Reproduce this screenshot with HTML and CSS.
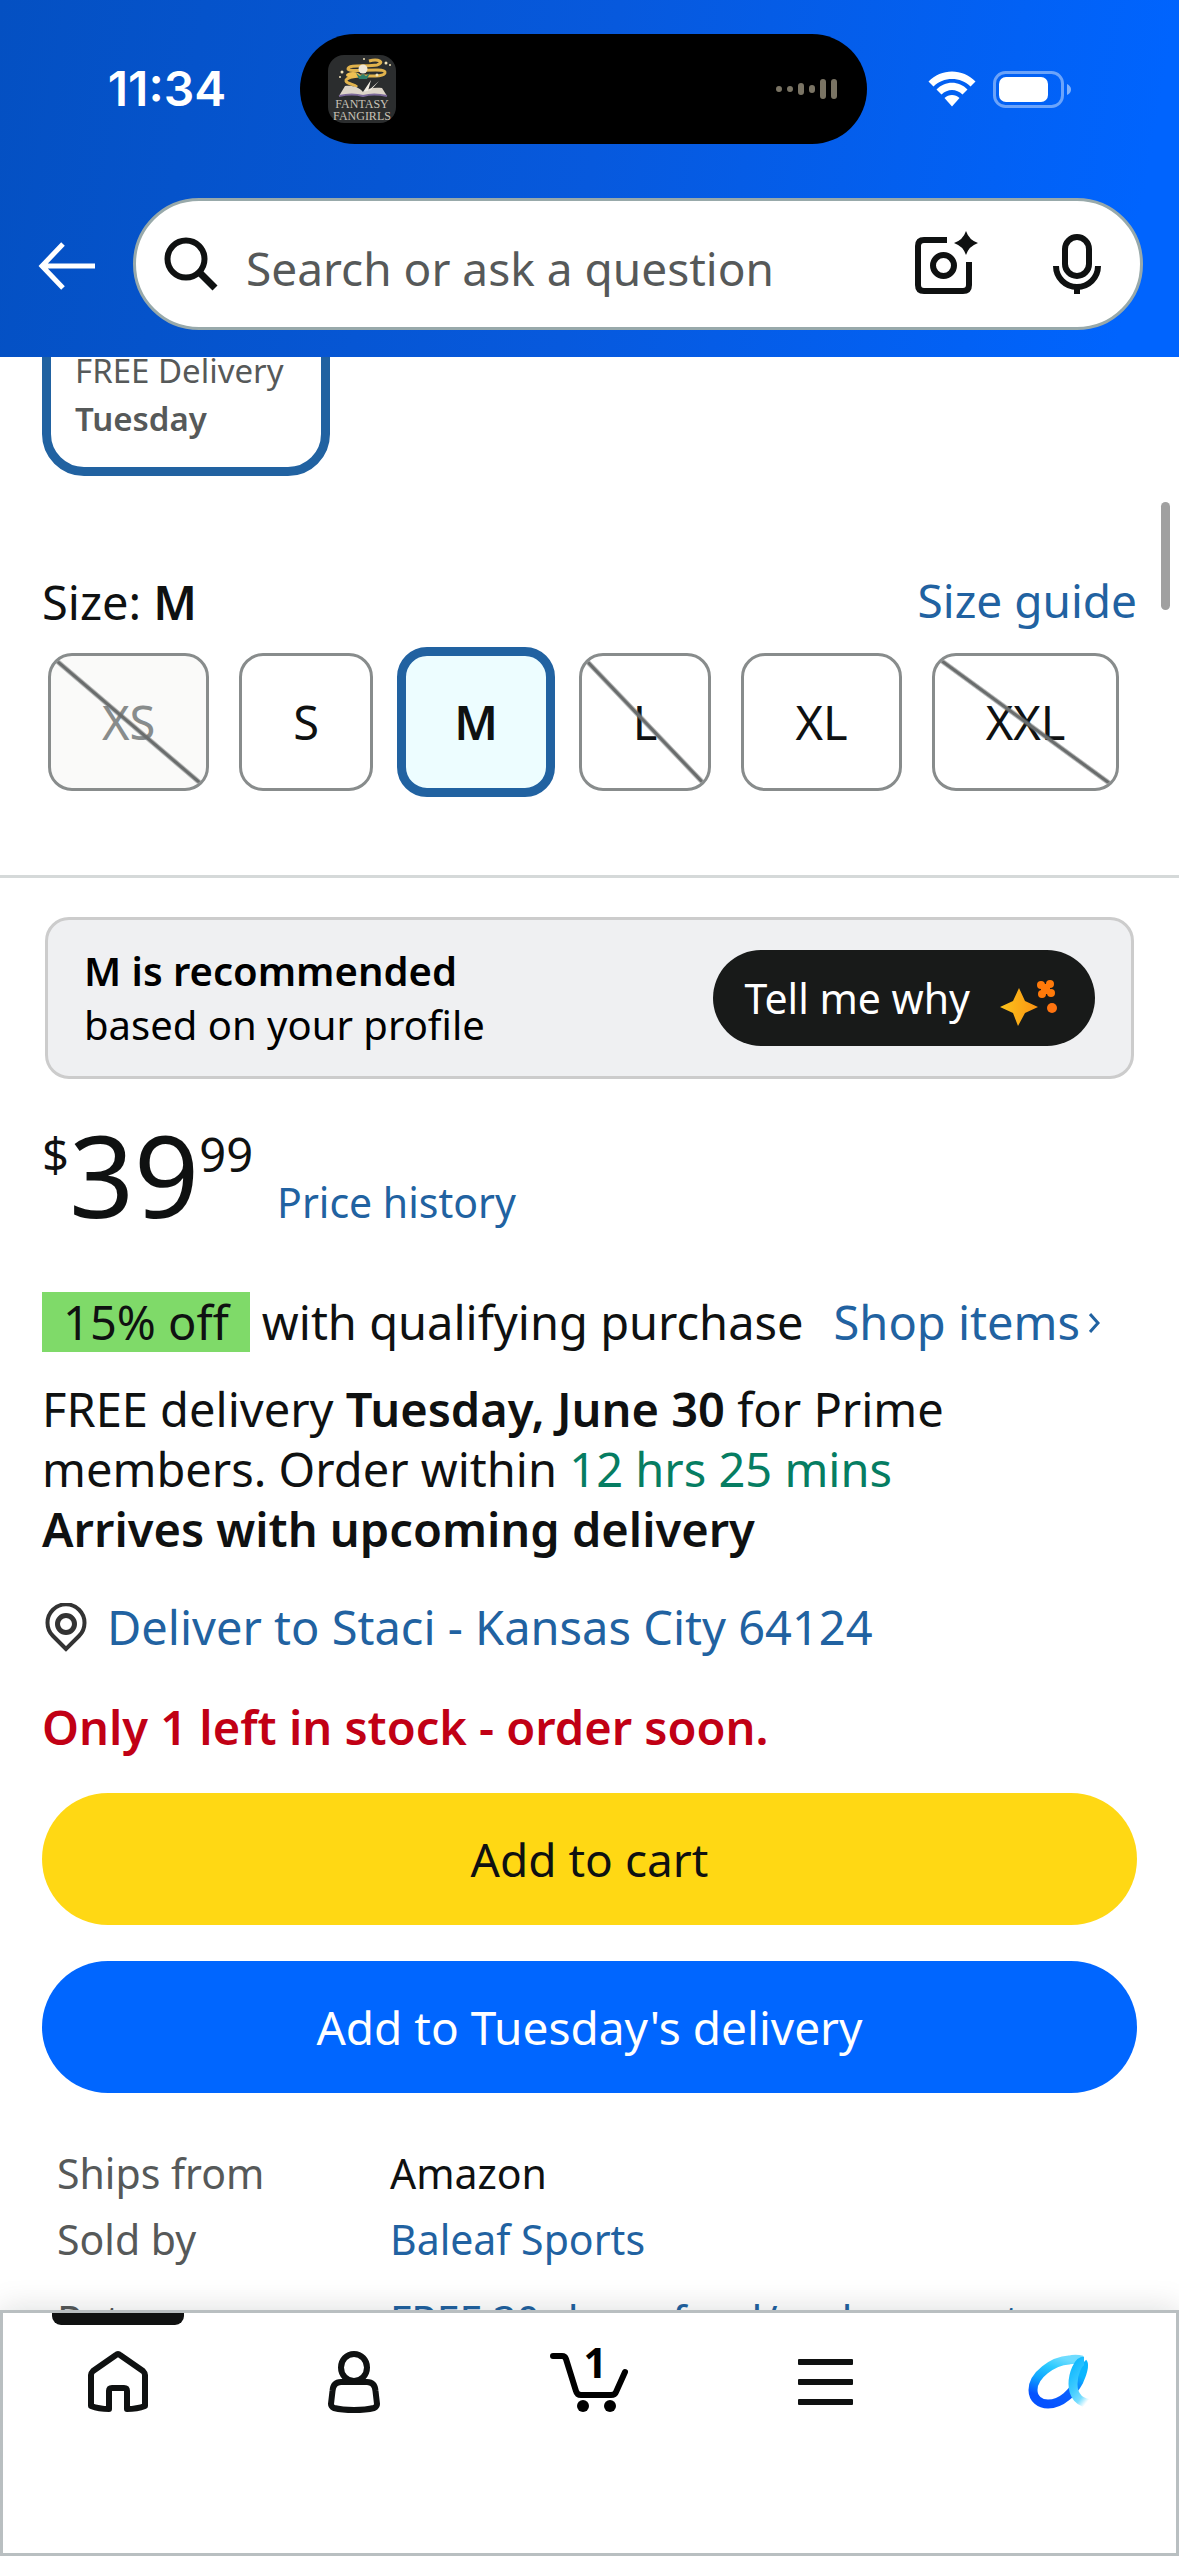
FILE: index.html
```
<!DOCTYPE html>
<html lang="en">
<head>
<meta charset="utf-8">
<meta name="viewport" content="width=device-width, initial-scale=1">
<title>Product details</title>
<link rel="stylesheet" href="styles.css">
</head>
<body>
<div class="app">
  <header class="header">
    <div class="status">
      <time class="status-time">11:34</time>
      <div class="island">
        <svg class="cover" viewBox="0 0 68 68" role="img" aria-label="Fantasy Fangirls podcast">
          <rect width="68" height="68" rx="16" fill="#2b2d2e"/>
          <path d="M41 6c10-3 16 2 8 4-9 2-29-1-29 4 0 4 36-2 37 3 1 5-14 4-22 4-9 0-18 2-17 5s8 3 11 6" fill="none" stroke="#e0b24c" stroke-width="3"/>
          <ellipse cx="25" cy="20" rx="7" ry="3" fill="#efbf52"/>
          <circle cx="35" cy="14" r="4.500" fill="#efe6d6"/>
          <path d="M28 18l4 3 3-2 3 2 4-3-3 6h-8z" fill="#2f7f6a"/>
          <path d="M11 41l6-10c7-1 14 1 18 6 5-4 12-5 19-4l5 8c-9-2-17-2-24 0-7-2-15-2-24 0z" fill="#ddd5c8"/>
          <path d="M35 37l8-12-3 11 11-10-8 9z" fill="#f3eee4"/>
          <path d="M11 41c9-2 17-2 24 0 7-2 15-2 24 0" fill="none" stroke="#7d6a9a" stroke-width="2"/>
          <g fill="#f2e3b8"><circle cx="14" cy="17" r="1.500"/><circle cx="12" cy="22" r="1"/><circle cx="36" cy="4" r="1"/><circle cx="58" cy="8" r="1.500"/><circle cx="49" cy="20" r="1.500"/><circle cx="62" cy="10" r="1"/></g>
          <text x="34" y="53" text-anchor="middle" font-family="Liberation Serif, serif" font-size="12" fill="#c9c3b8">FANTASY</text>
          <text x="34" y="65" text-anchor="middle" font-family="Liberation Serif, serif" font-size="12" fill="#c9c3b8">FANGIRLS</text>
        </svg>
        <svg class="levels" viewBox="0 0 62 22" aria-hidden="true" fill="none" stroke="#7a7464" stroke-width="6" stroke-linecap="round">
          <path d="M3 11v0.010M14 11v0.010M25 8v6M36 10v2M47 4v14M58 4v14"/>
        </svg>
      </div>
      <div class="status-icons">
        <svg class="wifi" viewBox="0 0 48 36" aria-hidden="true" fill="#fff">
          <path d="M0.500 10.500C13-3 35-3 47.500 10.500l-5 5C33 5.500 15 5.500 5.500 15.500z"/>
          <path d="M8.500 18.500C17 9.500 31 9.500 39.500 18.500l-5 5c-6-6-15-6-21 0z"/>
          <path d="M16.500 27c4-4 11-4 15 0L24 35.500z"/>
        </svg>
        <svg class="battery" viewBox="0 0 78 37" aria-hidden="true">
          <rect x="1.500" y="1.500" width="68" height="34" rx="11" fill="none" stroke="#fff" stroke-opacity=".42" stroke-width="3"/>
          <rect x="6" y="6" width="49" height="25" rx="7" fill="#fff"/>
          <path d="M74 13q4 2 4 5.500t-4 5.500z" fill="#fff" fill-opacity=".5"/>
        </svg>
      </div>
    </div>
    <div class="search-row">
      <button class="icon-button back" type="button" aria-label="Back">
        <svg width="58" height="48" viewBox="0 0 58 48" fill="none" stroke="#fff" stroke-width="5"><path d="M57 24H4M25 2L4 24l21 22"/></svg>
      </button>
      <form class="search" role="search">
        <svg width="54" height="54" viewBox="0 0 54 54" fill="none" stroke="#0f1111" stroke-width="6" aria-hidden="true"><circle cx="22" cy="22" r="18.500"/><path d="M35 35l16 16" stroke-width="7"/></svg>
        <input class="search-input" type="search" placeholder="Search or ask a question" aria-label="Search or ask a question">
        <button class="icon-button" type="button" aria-label="Search with camera">
          <svg width="66" height="66" viewBox="0 0 66 66" fill="none" stroke="#0f1111" stroke-width="6"><path d="M32 9H9q-6 0-6 6v39q0 6 6 6h39q6 0 6-6V31"/><circle cx="28.500" cy="34.500" r="10.500"/><path d="M51 0q3 9 12 12-9 3-12 12-3-9-12-12 9-3 12-12z" fill="#0f1111" stroke="none"/></svg>
        </button>
        <button class="icon-button mic" type="button" aria-label="Search by voice">
          <svg width="48" height="60" viewBox="0 0 48 60" fill="none" stroke="#0f1111" stroke-width="6"><rect x="12" y="3" width="24" height="39" rx="12"/><path d="M3 32a21 21 0 0 0 42 0M24 53v7"/></svg>
        </button>
      </form>
    </div>
  </header>

  <main class="content">
    <section class="variant">
      <div class="variant-card">
        <div>FREE Delivery</div>
        <strong>Tuesday</strong>
      </div>
    </section>

    <section class="sizes">
      <div class="sizes-head">
        <div>Size: <strong>M</strong></div>
        <a class="size-guide" href="#">Size guide</a>
      </div>
      <div class="size-list">
        <button class="size crossed" type="button" disabled>XS</button>
        <button class="size" type="button">S</button>
        <button class="size selected" type="button" aria-pressed="true">M</button>
        <button class="size crossed" type="button">L</button>
        <button class="size" type="button">XL</button>
        <button class="size crossed" type="button">XXL</button>
      </div>
    </section>

    <section class="details">
      <div class="advice">
        <div class="advice-text"><strong>M is recommended</strong><br>based on your profile</div>
        <button class="why" type="button">Tell me why
          <svg class="sparkles" width="62" height="54" viewBox="0 0 62 54" aria-hidden="true">
            <defs><linearGradient id="gold" x1="0" x2="1"><stop offset="0" stop-color="#fbc41c"/><stop offset="1" stop-color="#fb9312"/></linearGradient></defs>
            <path d="M22 11l6 13 13 6-13 6-7 13-5-13-13-6 13-6z" fill="url(#gold)"/>
            <g fill="#ff7a0a"><circle cx="44" cy="8" r="4"/><circle cx="53" cy="7" r="4"/><circle cx="45" cy="17" r="4"/><circle cx="54" cy="16" r="4"/><rect x="44" y="7" width="9" height="10"/></g>
            <circle cx="55" cy="31" r="5" fill="#ff7410"/>
          </svg>
        </button>
      </div>

      <div class="price-row">
        <div class="price"><span class="price-small">$</span><span class="price-whole">39</span><span class="price-small">99</span></div>
        <a class="price-history" href="#">Price history</a>
      </div>

      <div class="promo">
        <span class="badge">15% off</span>
        <span class="promo-text">with qualifying purchase</span>
        <a class="shop" href="#">Shop items
          <svg width="12" height="22" viewBox="0 0 12 22" fill="none" stroke="currentColor" stroke-width="3" aria-hidden="true"><path d="M1 3l8 9-8 9"/></svg>
        </a>
      </div>

      <p class="delivery">FREE delivery <strong>Tuesday, June 30</strong> for Prime members. Order within <span class="countdown">12 hrs 25 mins</span><br><strong>Arrives with upcoming delivery</strong></p>

      <a class="address" href="#">
        <svg width="42" height="49" viewBox="0 0 42 49" fill="none" stroke="#333" aria-hidden="true"><path d="M21 46L8 33a18.500 18.500 0 1 1 26 0z" stroke-width="4"/><circle cx="21" cy="21" r="8.500" stroke-width="5"/></svg>
        Deliver to Staci - Kansas City 64124
      </a>

      <p class="stock">Only 1 left in stock - order soon.</p>

      <div class="actions">
        <button class="cta cart" type="button">Add to cart</button>
        <button class="cta add-delivery" type="button">Add to Tuesday's delivery</button>
      </div>

      <table class="facts">
        <tr><th scope="row">Ships from</th><td>Amazon</td></tr>
        <tr><th scope="row">Sold by</th><td><a href="#">Baleaf Sports</a></td></tr>
        <tr class="returns"><th scope="row">Returns</th><td><a href="#">FREE 30-day refund/replacement</a></td></tr>
      </table>
    </section>
  </main>

  <div class="scroll-thumb"></div>

  <nav class="tabs" aria-label="Main">
    <a class="tab active" href="#" aria-label="Home">
      <svg width="72" height="72" viewBox="0 0 72 72" fill="none" stroke="#0f1111" stroke-width="6" stroke-linejoin="round"><path d="M34 9q2-2 4 0l23 16q2 2 2 4v31q-8 3-18 3V45q0-3-3-3H30q-3 0-3 3v18q-10 0-18-3V29q0-2 2-4z"/></svg>
    </a>
    <a class="tab" href="#" aria-label="Account">
      <svg width="72" height="72" viewBox="0 0 72 72" fill="none" stroke="#0f1111" stroke-width="6"><ellipse cx="36" cy="21.500" rx="13" ry="13.500"/><path d="M23 36h26c5 0 8 3 8.500 9l1.500 13c0 2-1 3-3 4-6 1.500-13 2-20 2s-14-.5-20-2c-2-1-3-2-3-4l1.500-13c.5-6 3.500-9 8.500-9z"/></svg>
    </a>
    <a class="tab" href="#" aria-label="Cart, 1 item">
      <span class="cart-icon">
        <svg width="80" height="72" viewBox="0 0 80 72" fill="none" stroke="#000" stroke-width="6" stroke-linecap="round"><path d="M4 10h9q3 0 4 3l10 32q1 4 5 4h30q4 0 5-3l9-20"/><circle cx="34" cy="60" r="6" fill="#000" stroke="none"/><circle cx="61" cy="60" r="6" fill="#000" stroke="none"/></svg>
        <span class="cart-count">1</span>
      </span>
    </a>
    <a class="tab" href="#" aria-label="Menu">
      <svg width="72" height="72" viewBox="0 0 72 72" fill="#0f1111"><rect x="9" y="13" width="55" height="6" rx="1"/><rect x="9" y="33" width="55" height="6" rx="1"/><rect x="9" y="53" width="55" height="6" rx="1"/></svg>
    </a>
    <a class="tab" href="#" aria-label="Alexa">
      <svg width="72" height="72" viewBox="0 0 72 72" fill="none" stroke-width="9">
        <defs>
          <linearGradient id="loop" x1=".7" y1="0" x2=".3" y2="1"><stop offset="0" stop-color="#6fdcff"/><stop offset=".25" stop-color="#2ccbff"/><stop offset=".55" stop-color="#0fa6ff"/><stop offset=".9" stop-color="#0552ff"/></linearGradient>
          <linearGradient id="rise" x1="0" y1="1" x2=".6" y2="0"><stop offset="0" stop-color="#0552ff"/><stop offset=".5" stop-color="#0a60ff"/><stop offset=".9" stop-color="#0bb6ff"/></linearGradient>
          <linearGradient id="tail" x1="0" y1="0" x2=".6" y2="1"><stop offset="0" stop-color="#0bb6ff"/><stop offset=".5" stop-color="#3fcbff"/><stop offset=".8" stop-color="#79deff"/><stop offset="1" stop-color="#79deff" stop-opacity="0"/></linearGradient>
        </defs>
        <path d="M23 58c14 0 25-12 31-23 4-9 6-16 4-18" stroke="url(#rise)"/>
        <path d="M57 14c-4-1-9-1-13 0C28 15 8 29 8 44c0 9 7 14 15 14" stroke="url(#loop)"/>
        <path d="M59 15c-6 0-11 13-11 23s5 20 21 20" stroke="url(#tail)"/>
      </svg>
    </a>
  </nav>
</div>
</body>
</html>
```
FILE: styles.css
```
*, *::before, *::after { box-sizing: border-box; }

body {
  margin: 0;
  background: #fff;
  color: #0f1111;
  font-family: "Noto Sans", "Open Sans", sans-serif;
  font-size: 47px;
  line-height: 60px;
}

strong { font-weight: 600; }
p { margin: 0; }
a { color: #2162a1; text-decoration: none; }
svg { display: block; flex: none; }

button {
  margin: 0;
  padding: 0;
  border: 0;
  background: none;
  color: inherit;
  font: inherit;
}

.app {
  position: relative;
  display: flex;
  flex-direction: column;
  height: 100vh;
}

/* Header */
.header {
  position: relative;
  z-index: 1;
  flex: none;
  padding: 34px 36px 27px 38px;
  background: linear-gradient(100deg, #0450c2 0%, #0759dd 50%, #0064fe 95%);
}

.status {
  display: grid;
  grid-template-columns: 1fr 567px 1fr;
  align-items: center;
  margin: 0 -36px 0 -38px;
  padding-right: 12px;
}

.status-time {
  padding-left: 34px;
  color: #fff;
  font-family: Inter, "Liberation Sans", sans-serif;
  font-size: 48px;
  font-weight: 600;
  text-align: center;
}

.island {
  display: flex;
  align-items: center;
  justify-content: space-between;
  height: 110px;
  padding: 0 29px 0 28px;
  border-radius: 55px;
  background: #000;
}

.cover { width: 68px; height: 68px; }
.levels { width: 62px; height: 22px; }
.wifi { width: 48px; height: 36px; }
.battery { width: 78px; height: 37px; }

.status-icons {
  display: flex;
  align-items: center;
  justify-content: center;
  gap: 17px;
  padding-right: 36px;
}

.search-row {
  display: flex;
  align-items: center;
  gap: 37px;
  margin-top: 54px;
}

.icon-button { flex: none; }
.back { padding-top: 4px; }

.search {
  display: flex;
  flex: 1;
  align-items: center;
  min-width: 0;
  height: 132px;
  padding: 0 39px 0 28px;
  border: 3px solid #98a9aa;
  border-radius: 66px;
  background: #fff;
}

.search-input {
  flex: 1;
  min-width: 0;
  height: 80px;
  margin-left: 28px;
  padding: 8px 0 0;
  border: 0;
  outline: 0;
  background: none;
  color: #0f1111;
  font: inherit;
  font-size: 46px;
}

.search-input::placeholder { color: #565959; opacity: 1; }
.mic { margin-left: 72px; }

/* Scrolling page */
.content {
  flex: 1;
  min-height: 0;
  overflow-y: auto;
  scrollbar-width: none;
}

.variant { padding: 0 42px; }

.variant-card {
  width: 288px;
  margin-top: -43px;
  padding: 24px;
  border: 9px solid #2162a1;
  border-radius: 42px;
  color: #565959;
  font-size: 33px;
  line-height: 48px;
}

.sizes {
  padding: 96px 42px 84px;
  border-bottom: 3px solid #d5d9d9;
}

.sizes-head {
  display: flex;
  justify-content: space-between;
}

.size-guide {
  font-size: 46px;
  line-height: 56px;
}

.size-list {
  display: flex;
  align-items: center;
  gap: 30px;
  height: 138px;
  margin-top: 21px;
  padding: 0 6px;
}

.size {
  position: relative;
  flex: none;
  height: 138px;
  padding: 0 51px;
  border: 3px solid #888c8c;
  border-radius: 24px;
  background: #fff;
  overflow: hidden;
}

.size:disabled {
  background: #fafaf9;
  color: #888c8c;
}

.size.selected {
  height: 150px;
  margin: 0 -6px;
  padding: 0 48px;
  border: 9px solid #2162a1;
  border-radius: 30px;
  background: #edfdff;
  font-weight: 600;
}

.size.crossed::after {
  content: "";
  position: absolute;
  inset: 0;
  background: linear-gradient(to top right, transparent calc(50% - 3px), #6a6d6d calc(50% - 1px), #6a6d6d calc(50% + 1px), transparent calc(50% + 3px));
}

.details { padding: 39px 42px 0; }

.advice {
  display: flex;
  align-items: center;
  justify-content: space-between;
  height: 162px;
  margin: 0 3px;
  padding: 0 36px;
  border: 3px solid #ccc;
  border-radius: 24px;
  background: #eff0f2;
  color: #000;
  font-size: 40px;
  line-height: 54px;
}

.why {
  display: flex;
  align-items: center;
  gap: 27px;
  height: 96px;
  padding: 0 36px 0 32px;
  border-radius: 48px;
  background: #181a19;
  color: #fff;
  font-size: 41px;
}

.sparkles { margin-top: 12px; }

.price-row {
  display: flex;
  align-items: flex-end;
  gap: 24px;
  margin-top: 35px;
}

.price { display: flex; }
.price-small { line-height: 80px; }
.price-whole { font-size: 114px; line-height: 120px; }
.price-history { font-size: 41px; line-height: 64px; }

.promo {
  display: flex;
  margin-top: 58px;
}

.badge {
  padding: 0 21px;
  background: #7fda69;
}

.promo-text { margin-left: 12px; }

.shop {
  display: flex;
  align-items: center;
  gap: 9px;
  margin-left: 30px;
}

.delivery {
  max-width: 1000px;
  margin-top: 27px;
}

.countdown { color: #067d62; }

.address {
  display: flex;
  align-items: center;
  gap: 20px;
  margin-top: 38px;
  padding-left: 3px;
}

.stock {
  margin-top: 40px;
  color: #c10015;
  font-weight: 600;
}

.actions {
  display: grid;
  gap: 36px;
  margin-top: 36px;
}

.cta {
  height: 132px;
  border-radius: 66px;
  font-size: 46px;
}

.cart { background: #ffd814; }
.add-delivery { background: #06f; color: #fff; }

.facts {
  margin: 47px 15px 0;
  border-spacing: 0;
  font-size: 41px;
  line-height: 66px;
}

.facts th,
.facts td {
  padding: 0;
  font-weight: 400;
  text-align: left;
}

.facts th {
  width: 333px;
  color: #565959;
}

.returns th,
.returns td { padding-top: 15px; }

.scroll-thumb {
  position: absolute;
  top: 502px;
  right: 9px;
  width: 9px;
  height: 108px;
  border-radius: 5px;
  background: #a0a0a0;
}

/* Bottom tabs */
.tabs {
  position: relative;
  display: flex;
  flex: none;
  padding: 3px 0 138px;
  background: #fff;
  box-shadow: inset 0 0 0 3px #b9bfc1, 0 0 30px rgba(15, 17, 17, .15);
}

.tab {
  position: relative;
  display: flex;
  flex: 1;
  justify-content: center;
  padding-top: 33px;
}

.tab.active::before {
  content: "";
  position: absolute;
  top: 0;
  width: 132px;
  height: 12px;
  border-radius: 0 0 9px 9px;
  background: #0f1111;
}

.cart-icon { position: relative; }

.cart-count {
  position: absolute;
  top: -14px;
  left: 34px;
  color: #000;
  font-size: 41px;
  font-weight: 700;
}
```
